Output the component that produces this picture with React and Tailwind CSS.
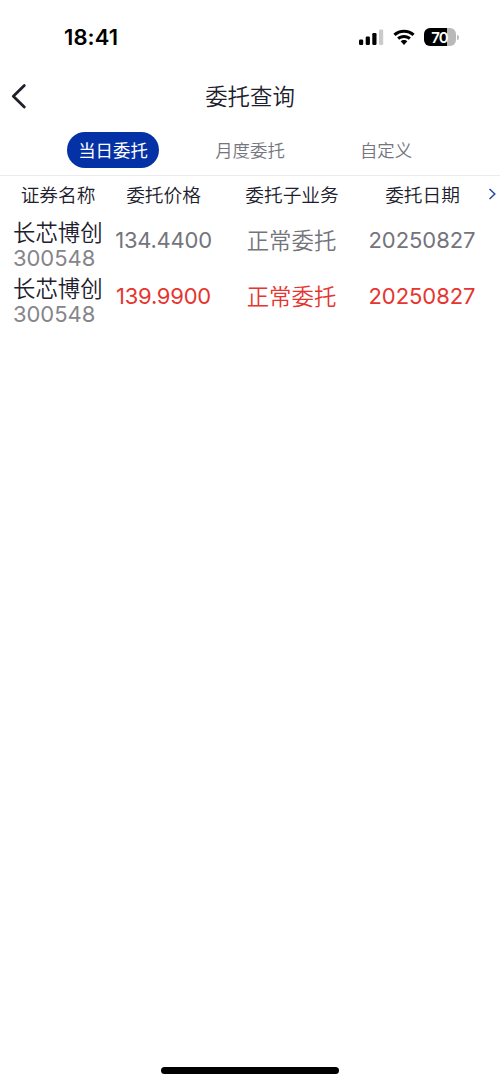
const orders = [
  { name: '长芯博创', code: '300548', price: '134.4400', kind: '正常委托', date: '20250827', tone: 'text-[#73747c]' },
  { name: '长芯博创', code: '300548', price: '139.9900', kind: '正常委托', date: '20250827', tone: 'text-[#e6352f]' },
];

function StatusBar() {
  return (
    <div className="flex h-[74px] items-center justify-between pl-16 pr-[41px] text-black">
      <span className="font-['Inter'] text-[22px] font-semibold leading-6 tracking-[0.1px]">18:41</span>
      <div className="flex items-center">
        <svg className="h-[17px] w-[25px]" viewBox="0 0 25 17">
          <rect x="0" y="10.5" width="4.2" height="5.5" rx="1.2" />
          <rect x="6.7" y="7.5" width="4.2" height="8.5" rx="1.2" />
          <rect x="13.3" y="4" width="4.2" height="12" rx="1.2" />
          <rect x="20" y="0.5" width="4.2" height="15.5" rx="1.2" fill="#cbcbcb" />
        </svg>
        <svg className="ml-[9px] h-[17px] w-[22px]" viewBox="0 0 22 17">
          <path d="M11 0.7C6.9 0.7 3.2 2.2 0.4 4.8L2.5 7C4.8 4.9 7.7 3.7 11 3.7S17.2 4.9 19.5 7L21.6 4.8C18.8 2.2 15.1 0.7 11 0.7Z" />
          <path d="M11 5.9C8.3 5.9 5.9 6.9 4.1 8.6L6.2 10.8C7.5 9.6 9.1 8.9 11 8.9S14.5 9.6 15.8 10.8L17.9 8.6C16.1 6.9 13.7 5.9 11 5.9Z" />
          <path d="M11 11C9.7 11 8.6 11.5 7.7 12.3L11 16L14.3 12.3C13.4 11.5 12.3 11 11 11Z" />
        </svg>
        <div className="ml-[9px] flex h-[18px] w-8 items-center justify-center rounded-[6px] bg-[linear-gradient(90deg,#000_71%,#b9b9b9_71%)] pr-px pt-px font-['Inter'] text-[15px] font-semibold leading-none tracking-[-0.9px] text-white">
          70
        </div>
        <div className="ml-px h-[5px] w-0.5 rounded-r-full bg-[#bcbcbc]" />
      </div>
    </div>
  );
}

export default function App() {
  return (
    <div className="flex h-[1084px] w-[500px] flex-col overflow-hidden bg-white font-['Inter','Noto_Sans_CJK_SC',sans-serif] font-[350] text-[#20202c]">
      <StatusBar />
      <header className="grid h-[44px] grid-cols-[60px_1fr_60px] items-center">
        <button aria-label="返回" className="pl-[11px]">
          <svg className="h-[26px] w-4" viewBox="0 0 16 26" fill="none" stroke="#20202c" strokeWidth="2.8" strokeLinecap="round" strokeLinejoin="round">
            <path d="M13.3 2.5L2.3 13.3L13.3 24" />
          </svg>
        </button>
        <h1 className="pt-0.5 text-center text-[22.4px] font-[350] leading-8">委托查询</h1>
      </header>
      <nav className="flex h-[58px] items-center border-b border-[#ebebee] pt-1.5 text-[17.4px] leading-none text-[#74757d]">
        <button className="ml-[67px] flex h-[36px] w-[92px] items-center justify-center rounded-full bg-[#0431a5] pt-0.5 font-normal text-white">当日委托</button>
        <button className="ml-[46px] w-[90px] pt-[3px]">月度委托</button>
        <button className="ml-[46px] w-[90px] pt-[3px]">自定义</button>
      </nav>
      <main className="flex-1">
        <div className="grid h-[42px] grid-cols-[116px_95px_162px_99px_28px] items-center pb-[3px] text-center text-[18.7px] leading-[28px]">
          <span>证券名称</span>
          <span>委托价格</span>
          <span>委托子业务</span>
          <span>委托日期</span>
          <svg className="mb-[3px] ml-4 h-3 w-[9px]" viewBox="0 0 9 12" fill="none" stroke="#2948a5" strokeWidth="1.5">
            <path d="M1.5 1L6.8 6L1.5 11" />
          </svg>
        </div>
        {orders.map((order) => (
          <div key={order.price} className="grid h-14 grid-cols-[103px_121px_135px_126px] items-start whitespace-nowrap text-center text-[22.4px]">
            <div className="pl-[13px] text-left">
              <div className="leading-[29px]">{order.name}</div>
              <div className="text-[22px] font-normal leading-[22px] tracking-[-0.05px] text-[#85858a]">{order.code}</div>
            </div>
            <span className={`pt-1.5 text-[22px] font-normal leading-[32px] tracking-[-0.25px] ${order.tone}`}>{order.price}</span>
            <span className={`pt-[7px] leading-[32px] ${order.tone}`}>{order.kind}</span>
            <span className={`pt-1.5 text-[22px] font-normal leading-[32px] tracking-[-0.05px] ${order.tone}`}>{order.date}</span>
          </div>
        ))}
      </main>
      <div className="mx-auto mb-2.5 h-[7px] w-[178px] rounded-full bg-black" />
    </div>
  );
}
